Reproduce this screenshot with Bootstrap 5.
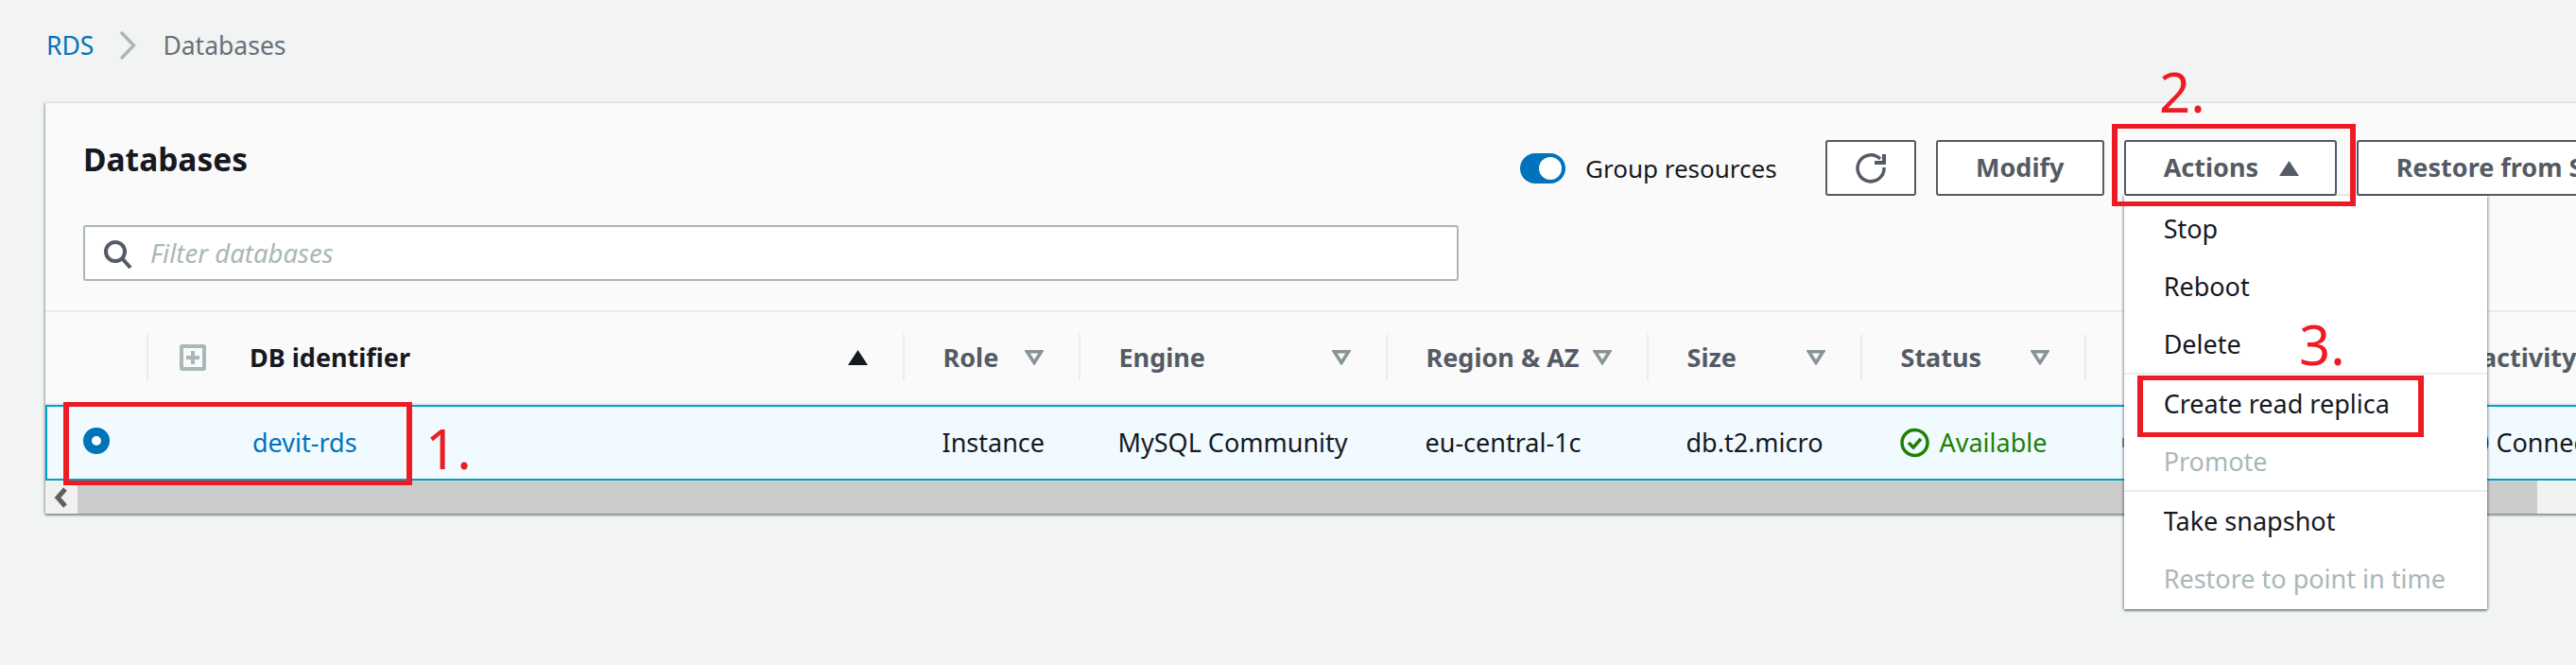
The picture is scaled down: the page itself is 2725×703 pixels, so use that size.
<!DOCTYPE html>
<html lang="en">
<head>
    <meta charset="UTF-8">
    <title>RDS Databases</title>
    <link href="https://cdn.jsdelivr.net/npm/bootstrap@5.3.0/dist/css/bootstrap.min.css" rel="stylesheet">
    <style>
        html, body {
            height: 703px;
            overflow: hidden;
        }
        body {
            background: #f2f3f3;
            color: #16191f;
            font-family: "Noto Sans", sans-serif;
            font-size: 27px;
            line-height: 36px;
        }
        a { text-decoration: none; color: #0073bb; }
        .page { position: relative; width: 2725px; height: 703px; }

        .crumbs { height: 109px; padding: 30px 0 0 49px; align-items: flex-start; font-size: 26.500px; }
        .crumbs .here { color: #687078; }
        .crumbs svg { margin: 3px 28px 0 27px; }

        .db-card {
            width: 3000px;
            margin-left: 48px;
            background: #fafafa;
            border: 0;
            border-radius: 0;
            box-shadow: 0 2px 2px rgba(0,28,36,.45), -2px 0 2px rgba(0,28,36,.15), 0 -1px 2px rgba(0,28,36,.08);
        }
        .top-area { height: 221px; padding-left: 40px; border-bottom: 2px solid #eaeded; }
        .title-col { width: 1455px; }
        .page-title { font-size: 33.500px; line-height: 44px; font-weight: 700; margin: 37px 0 0 0; height: 92px; }
        .filter-box { position: relative; width: 1455px; }
        .filter-box svg { position: absolute; left: 21px; top: 16px; }
        .filter-box .form-control {
            height: 59px;
            padding-left: 69px;
            border: 2px solid #aab7b8;
            border-radius: 3px;
            font-size: 27.500px;
        }
        .filter-box .form-control::placeholder { color: #aab7b8; font-style: italic; }

        .tools { margin: 39px 0 0 65px; height: 59px; align-items: center; gap: 21px; }
        .tools .form-switch { padding: 0; margin: 0; min-height: 0; height: 32px; }
        .tools .form-check-input {
            width: 48px; height: 32px; margin: 0; float: none; display: block;
            background-color: #0073bb; border: 0;
        }
        .group-label { font-size: 26px; margin-right: 30px; white-space: nowrap; }
        .aws-btn {
            height: 59px;
            padding: 0 40px;
            background: #fff;
            border: 2px solid #545b64;
            border-radius: 3px;
            color: #545b64;
            font-size: 27px;
            font-weight: 700;
            white-space: nowrap;
            display: flex;
            align-items: center;
            --bs-btn-hover-color: #545b64;
        }
        .btn-refresh { width: 96px; padding: 0; justify-content: center; }
        .btn-modify { width: 178px; padding: 0; justify-content: center; }
        .btn-actions { width: 225px; padding-right: 0; gap: 22px; }

        .menu-host { position: relative; }
        .actions-menu {
            display: block;
            top: 100%;
            left: 0;
            width: 384px;
            padding: 4px 0 2px;
            margin: 0;
            border: 0;
            border-radius: 0;
            font-size: 27px;
            box-shadow: 0 2px 2px rgba(0,28,36,.45), 2px 0 2px rgba(0,28,36,.2), -2px 0 2px rgba(0,28,36,.2);
        }
        .actions-menu .dropdown-item { height: 61px; padding: 0 0 0 42px; line-height: 61px; color: #16191f; }
        .actions-menu .dropdown-item.disabled { color: #aab7b8; }
        .actions-menu .dropdown-divider { margin: 0; height: 2px; border-top: 2px solid #eaeded; opacity: 1; }

        .db-grid {
            display: grid;
            grid-template-columns: 107px 800px 186px 325px 276px 226px 237px 309px 500px;
        }
        .head-row { height: 98px; border-bottom: 2px solid #eaeded; align-items: center; }
        .hcell {
            height: 49px;
            margin-top: -1px;
            border-left: 2px solid #eaeded;
            padding: 0 37px 0 40.500px;
            display: flex;
            align-items: center;
            justify-content: space-between;
            color: #545b64;
            font-weight: 700;
            white-space: nowrap;
        }
        .hcell.first { border-left: 0; }
        .hcell.plain { border-left: 0; padding: 0; }
        .id-cell { padding-left: 33px; color: #16191f; }
        .id-cell .plus { margin-right: 46px; }
        .select-row {
            height: 80px;
            background: #f1faff;
            border: solid #00a1c9;
            border-width: 2px 0 2px 2px;
            align-items: center;
        }
        .dcell { padding-left: 39.500px; white-space: nowrap; }
        .dcell.id-name { padding-left: 110px; }
        .dcell.conn-cell { padding-left: 102px; }
        .radio-dot {
            display: block;
            width: 28px; height: 28px;
            margin: -4px 0 0 38px;
            border: 9px solid #0073bb;
            border-radius: 50%;
            background: #fff;
        }
        .ok-text { color: #1d8102; gap: 11px; }
        .cpu-bar { display: block; width: 200px; height: 10px; margin-left: -2px; background: #879596; }

        .scroll-row { height: 35px; }
        .scroll-btn { width: 34px; background: #f1f1f1; }
        .scroll-thumb { width: 2602px; background: #ccc; }
        .scroll-rest { background: #f1f1f1; }

        .red-box { position: absolute; border: solid #ed1c24; border-width: 5px 6px; z-index: 1010; }
        .red-num {
            position: absolute;
            color: #ed1c24;
            font-size: 58px;
            line-height: 58px;
            z-index: 1010;
        }
    </style>
</head>
<body>
<div class="page">

    <nav class="crumbs d-flex">
        <a href="#">RDS</a>
        <svg width="18" height="30" viewBox="0 0 18 30"><path d="M2 1l13.500 14L2 29" fill="none" stroke="#aab7b8" stroke-width="3.500"/></svg>
        <span class="here">Databases</span>
    </nav>

    <div class="card db-card">
        <div class="top-area d-flex">
            <div class="title-col">
                <h1 class="page-title">Databases</h1>
                <div class="filter-box">
                    <svg width="32" height="30" viewBox="0 0 32 30"><circle cx="13" cy="12" r="10" fill="none" stroke="#545b64" stroke-width="4"/><path d="M20 19l9 10" stroke="#545b64" stroke-width="4"/></svg>
                    <input class="form-control" type="text" placeholder="Filter databases">
                </div>
            </div>
            <div class="tools d-flex">
                <div class="form-check form-switch"><input class="form-check-input" type="checkbox" checked></div>
                <span class="group-label">Group resources</span>
                <button class="btn aws-btn btn-refresh">
                    <svg width="34" height="34" viewBox="0 0 34 34"><path d="M27 7A14 14 0 1 0 31 16" fill="none" stroke="#545b64" stroke-width="3.5"/><path d="M29 2h4v11H21v-4h8z" fill="#545b64"/></svg>
                </button>
                <button class="btn aws-btn btn-modify">Modify</button>
                <div class="menu-host">
                    <button class="btn aws-btn btn-actions">Actions
                        <svg width="21" height="16" viewBox="0 0 21 16"><path d="M10.500 0L21 16H0z" fill="#545b64"/></svg>
                    </button>
                    <ul class="dropdown-menu actions-menu show list-unstyled">
                        <li><a class="dropdown-item" href="#">Stop</a></li>
                        <li><a class="dropdown-item" href="#">Reboot</a></li>
                        <li><a class="dropdown-item" href="#">Delete</a></li>
                        <li><hr class="dropdown-divider"></li>
                        <li><a class="dropdown-item" href="#">Create read replica</a></li>
                        <li><a class="dropdown-item disabled" href="#">Promote</a></li>
                        <li><hr class="dropdown-divider"></li>
                        <li><a class="dropdown-item" href="#">Take snapshot</a></li>
                        <li><a class="dropdown-item disabled" href="#">Restore to point in time</a></li>
                    </ul>
                </div>
                <button class="btn aws-btn">Restore from S3</button>
            </div>
        </div>

        <div class="db-grid head-row">
            <div class="hcell first"></div>
            <div class="hcell id-cell">
                <span class="d-flex align-items-center">
                    <svg class="plus" width="28" height="28" viewBox="0 0 28 28"><rect x="2" y="2" width="24" height="24" rx="1" fill="none" stroke="#aab7b8" stroke-width="4"/><path d="M14 7v14M7 14h14" stroke="#aab7b8" stroke-width="4"/></svg>
                    DB identifier
                </span>
                <svg width="21" height="16" viewBox="0 0 21 16"><path d="M10.500 0L21 16H0z" fill="#16191f"/></svg>
            </div>
            <div class="hcell">Role <svg width="20" height="16" viewBox="0 0 20 16"><path d="M2.500 1.800h15L10 13.500z" fill="none" stroke="#879596" stroke-width="3.500"/></svg></div>
            <div class="hcell">Engine <svg width="20" height="16" viewBox="0 0 20 16"><path d="M2.500 1.800h15L10 13.500z" fill="none" stroke="#879596" stroke-width="3.500"/></svg></div>
            <div class="hcell">Region &amp; AZ <svg width="20" height="16" viewBox="0 0 20 16"><path d="M2.500 1.800h15L10 13.500z" fill="none" stroke="#879596" stroke-width="3.500"/></svg></div>
            <div class="hcell">Size <svg width="20" height="16" viewBox="0 0 20 16"><path d="M2.500 1.800h15L10 13.500z" fill="none" stroke="#879596" stroke-width="3.500"/></svg></div>
            <div class="hcell">Status <svg width="20" height="16" viewBox="0 0 20 16"><path d="M2.500 1.800h15L10 13.500z" fill="none" stroke="#879596" stroke-width="3.500"/></svg></div>
            <div class="hcell"></div>
            <div class="hcell plain">Current activity</div>
        </div>

        <div class="db-grid select-row">
            <div><span class="radio-dot"></span></div>
            <div class="dcell id-name"><a href="#">devit-rds</a></div>
            <div class="dcell">Instance</div>
            <div class="dcell">MySQL Community</div>
            <div class="dcell">eu-central-1c</div>
            <div class="dcell">db.t2.micro</div>
            <div class="dcell d-flex align-items-center ok-text">
                <svg width="31" height="32" viewBox="0 0 31 32"><circle cx="15.500" cy="16" r="13.500" fill="none" stroke="#1d8102" stroke-width="3.500"/><path d="M9 16l5 5 8-9" fill="none" stroke="#1d8102" stroke-width="3.500"/></svg>
                Available
            </div>
            <div class="dcell"><span class="cpu-bar"></span></div>
            <div class="dcell conn-cell">0 Connections</div>
        </div>

        <div class="scroll-row d-flex">
            <div class="scroll-btn d-flex align-items-center justify-content-center">
                <svg width="16" height="22" viewBox="0 0 16 22"><path d="M12 2L4 11l8 9" fill="none" stroke="#606060" stroke-width="5"/></svg>
            </div>
            <div class="scroll-thumb"></div>
            <div class="scroll-rest flex-grow-1"></div>
        </div>
    </div>

    <div class="red-box" style="left:67px;top:425px;width:369px;height:88px"></div>
    <div class="red-box" style="left:2234px;top:131px;width:258px;height:87px"></div>
    <div class="red-box" style="left:2261px;top:397px;width:303px;height:65px"></div>
    <span class="red-num" style="left:450px;top:445px">1.</span>
    <span class="red-num" style="left:2284px;top:68px">2.</span>
    <span class="red-num" style="left:2432px;top:335px">3.</span>
</div>
<script src="https://cdn.jsdelivr.net/npm/bootstrap@5.3.0/dist/js/bootstrap.bundle.min.js"></script>
</body>
</html>
